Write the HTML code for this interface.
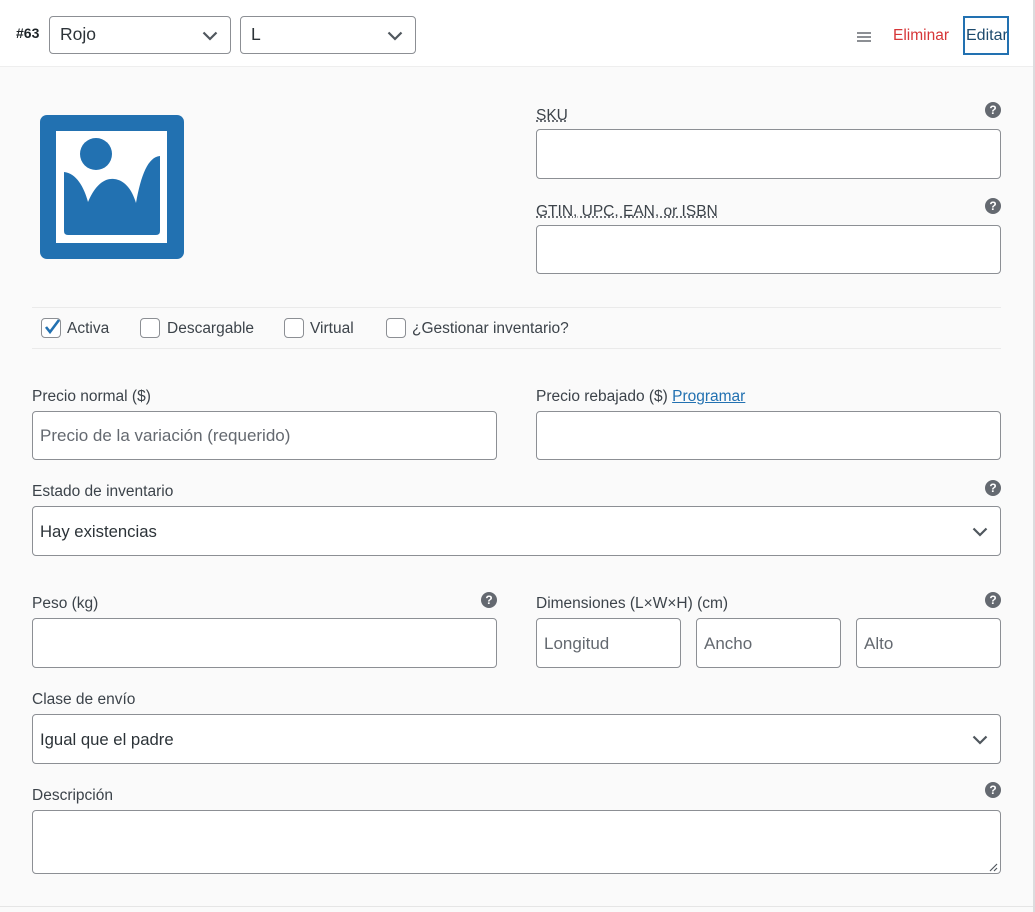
<!DOCTYPE html>
<html><head><meta charset="utf-8"><style>
*{box-sizing:border-box;margin:0;padding:0}
body{width:1035px;height:912px;background:#fafafa;font-family:"Segoe UI","Liberation Sans","DejaVu Sans",sans-serif;color:#3c434a;position:relative;overflow:hidden}
.a{position:absolute}
.hdr{left:0;top:0;width:1033px;height:67px;background:#fff;border-bottom:1px solid #eee}
.rb{left:1033px;top:0;width:2px;height:912px;background:#dcdcde}
.bb{left:0;top:906px;width:1033px;height:1px;background:#e5e5e5}
.sel{border:1px solid #8c8f94;border-radius:4px;background:#fff;color:#2c3338;font-size:16.7px}
.sel svg{position:absolute;right:12px;top:50%;margin-top:-4px}
.inp{border:1px solid #8c8f94;border-radius:4px;background:#fff;font-size:17px;color:#646970;padding-left:7px}
.lbl{font-size:15.5px;color:#3c434a;white-space:nowrap}
.help{width:16px;height:16px;border-radius:50%;background:#646970;color:#fff;font-size:12px;font-weight:bold;text-align:center;line-height:16px;font-family:"Liberation Sans",sans-serif}
.cb{width:20px;height:20px;border:1px solid #8c8f94;border-radius:4px;background:#fff}
.hl{height:1px;background:#eaeaea;left:32px;width:969px}
</style></head><body>
<div class="a hdr"></div>
<div class="a rb"></div>
<div class="a" style="left:16px;top:25px;font-size:14px;font-weight:bold;color:#1d2327">#63</div>
<div class="a sel" style="left:49px;top:16px;width:182px;height:38px;padding:7px 0 0 10px;font-family:'Liberation Sans',sans-serif;font-size:17.5px">Rojo<svg width="16" height="10" viewBox="0 0 16 10"><path d="M1.5 1.5l6.5 6.5 6.5-6.5" stroke="#50575e" stroke-width="2.2" fill="none"/></svg></div>
<div class="a sel" style="left:240px;top:16px;width:176px;height:38px;padding:7px 0 0 10px;font-family:'Liberation Sans',sans-serif;font-size:17.5px">L<svg width="16" height="10" viewBox="0 0 16 10"><path d="M1.5 1.5l6.5 6.5 6.5-6.5" stroke="#50575e" stroke-width="2.2" fill="none"/></svg></div>
<svg class="a" style="left:857px;top:32px" width="14" height="10"><path d="M0 1h14M0 5h14M0 9h14" stroke="#8c8f94" stroke-width="2"/></svg>
<div class="a" style="left:893px;top:27px;font-size:15.5px;color:#d63638">Eliminar</div>
<div class="a" style="left:963px;top:16px;width:46px;height:39px;border:2px solid #2271b1;font-size:16px;color:#1d4a6d;padding:9px 0 0 1px;overflow:hidden;white-space:nowrap">Editar</div>

<svg class="a" style="left:40px;top:115px" width="144" height="144" viewBox="0 0 144 144">
<rect width="144" height="144" rx="7" fill="#2271b1"/>
<rect x="16" y="16" width="111" height="112" fill="#fff"/>
<circle cx="56" cy="39" r="16" fill="#2271b1"/>
<path d="M24 57 C36 58 44 72 48 87 C56 68 66 63 74 64 C85 65 92 75 96 88 C101 60 108 42 120 41 L120 116 Q120 120 116 120 L28 120 Q24 120 24 116 Z" fill="#2271b1"/>
</svg>

<div class="a lbl" style="left:536px;top:107px;text-decoration:underline dotted">SKU</div>
<div class="a help" style="left:985px;top:102px">?</div>
<div class="a inp" style="left:536px;top:129px;width:465px;height:50px"></div>
<div class="a lbl" style="left:536px;top:203px;text-decoration:underline dotted">GTIN, UPC, EAN, or ISBN</div>
<div class="a help" style="left:985px;top:198px">?</div>
<div class="a inp" style="left:536px;top:225px;width:465px;height:49px"></div>

<div class="a hl" style="top:307px"></div>
<div class="a hl" style="top:348px"></div>
<div class="a cb" style="left:41px;top:318px"></div>
<svg class="a" style="left:42px;top:317px" width="20" height="20"><path d="M4 10l4 5 9-12" stroke="#2271b1" stroke-width="2.6" fill="none"/></svg>
<div class="a lbl" style="left:67px;top:320px">Activa</div>
<div class="a cb" style="left:140px;top:318px"></div>
<div class="a lbl" style="left:167px;top:320px">Descargable</div>
<div class="a cb" style="left:284px;top:318px"></div>
<div class="a lbl" style="left:310px;top:320px">Virtual</div>
<div class="a cb" style="left:386px;top:318px"></div>
<div class="a lbl" style="left:412px;top:320px">¿Gestionar inventario?</div>

<div class="a lbl" style="left:32px;top:388px">Precio normal ($)</div>
<div class="a inp" style="left:32px;top:411px;width:465px;height:49px;padding-top:14px">Precio de la variación (requerido)</div>
<div class="a lbl" style="left:536px;top:388px">Precio rebajado ($) <span style="color:#2271b1;text-decoration:underline">Programar</span></div>
<div class="a inp" style="left:536px;top:411px;width:465px;height:49px"></div>

<div class="a lbl" style="left:32px;top:483px">Estado de inventario</div>
<div class="a help" style="left:985px;top:480px">?</div>
<div class="a sel" style="left:32px;top:506px;width:969px;height:50px;padding:15px 0 0 7px">Hay existencias<svg width="16" height="10" viewBox="0 0 16 10"><path d="M1.5 1.5l6.5 6.5 6.5-6.5" stroke="#50575e" stroke-width="2.2" fill="none"/></svg></div>

<div class="a lbl" style="left:32px;top:595px">Peso (kg)</div>
<div class="a help" style="left:481px;top:592px">?</div>
<div class="a inp" style="left:32px;top:618px;width:465px;height:50px"></div>
<div class="a lbl" style="left:536px;top:595px">Dimensiones (L×W×H) (cm)</div>
<div class="a help" style="left:985px;top:592px">?</div>
<div class="a inp" style="left:536px;top:618px;width:145px;height:50px;padding-top:15px">Longitud</div>
<div class="a inp" style="left:696px;top:618px;width:145px;height:50px;padding-top:15px">Ancho</div>
<div class="a inp" style="left:856px;top:618px;width:145px;height:50px;padding-top:15px">Alto</div>

<div class="a lbl" style="left:32px;top:691px">Clase de envío</div>
<div class="a sel" style="left:32px;top:714px;width:969px;height:50px;padding:15px 0 0 7px">Igual que el padre<svg width="16" height="10" viewBox="0 0 16 10"><path d="M1.5 1.5l6.5 6.5 6.5-6.5" stroke="#50575e" stroke-width="2.2" fill="none"/></svg></div>

<div class="a lbl" style="left:32px;top:787px">Descripción</div>
<div class="a help" style="left:985px;top:782px">?</div>
<div class="a inp" style="left:32px;top:810px;width:969px;height:64px"></div>
<svg class="a" style="left:989px;top:863px" width="9" height="9"><path d="M1 8L8 1M5 8L8 5" stroke="#50575e" stroke-width="1.2"/></svg>
<div class="a bb"></div>
</body></html>
